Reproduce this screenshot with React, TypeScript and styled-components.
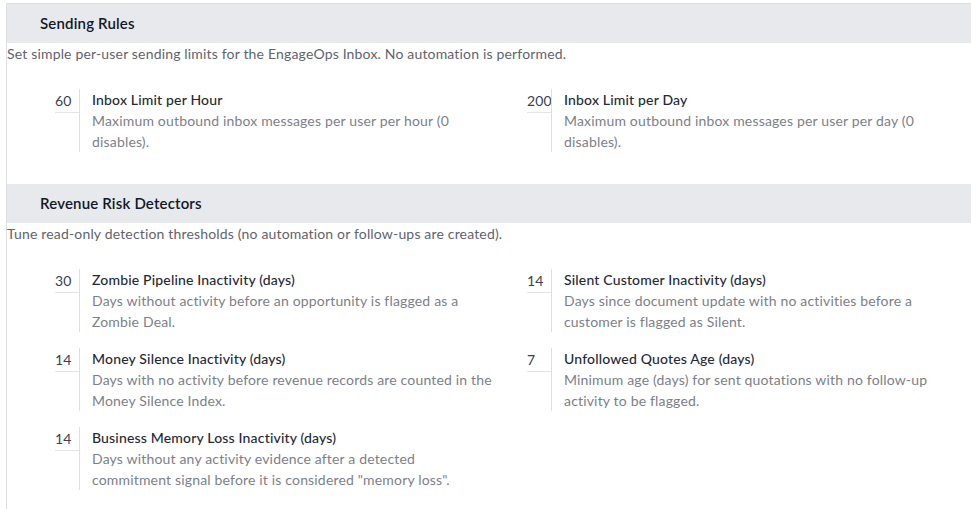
import React from "react";
import styled, { createGlobalStyle } from "styled-components";

const GlobalStyle = createGlobalStyle`
  html, body {
    margin: 0;
    padding: 0;
    background: #ffffff;
  }
  body {
    font-family: Lato, "Noto Sans", "Liberation Sans", sans-serif;
    font-size: 14px;
    line-height: 21px;
    letter-spacing: 0.17px;
    color: #374151;
  }
`;

const Page = styled.div`
  padding: 3px 0 0 6px;
`;

const Sheet = styled.div`
  border-top: 1px solid #dcdee2;
  border-left: 1px solid #dcdee2;
  min-height: 505px;
`;

const Block = styled.section`
  padding-bottom: 32px;
`;

const BlockTitle = styled.h2`
  margin: 0;
  height: 39px;
  display: flex;
  align-items: center;
  padding-left: 33px;
  background: #e7e9ed;
  font-size: 15px;
  font-weight: 600;
  color: #111827;
`;

const BlockTip = styled.div`
  color: #5f636f;
`;

const Grid = styled.div`
  display: grid;
  grid-template-columns: 472px 1fr;
  row-gap: 16px;
  margin-top: 25px;
  padding-left: 48px;
`;

const Box = styled.div`
  display: flex;
  align-items: flex-start;
`;

const ValuePane = styled.div`
  flex: 0 0 24px;
  width: 24px;
  height: 22px;
  padding-top: 1px;
  border-bottom: 1px solid #e2e4e8;
  color: #374151;
  white-space: nowrap;
`;

const TextPane = styled.div`
  border-left: 1px solid #dcdee2;
  padding-left: 12px;
  max-width: 402px;
`;

const Label = styled.div`
  font-weight: 500;
  color: #1f2937;
`;

const Help = styled.div`
  color: #7c7f89;
`;

type Setting = { value: string; label: string; help: string };

const sections: { title: string; tip: string; settings: Setting[] }[] = [
  {
    title: "Sending Rules",
    tip: "Set simple per-user sending limits for the EngageOps Inbox. No automation is performed.",
    settings: [
      {
        value: "60",
        label: "Inbox Limit per Hour",
        help: "Maximum outbound inbox messages per user per hour (0 disables).",
      },
      {
        value: "200",
        label: "Inbox Limit per Day",
        help: "Maximum outbound inbox messages per user per day (0 disables).",
      },
    ],
  },
  {
    title: "Revenue Risk Detectors",
    tip: "Tune read-only detection thresholds (no automation or follow-ups are created).",
    settings: [
      {
        value: "30",
        label: "Zombie Pipeline Inactivity (days)",
        help: "Days without activity before an opportunity is flagged as a Zombie Deal.",
      },
      {
        value: "14",
        label: "Silent Customer Inactivity (days)",
        help: "Days since document update with no activities before a customer is flagged as Silent.",
      },
      {
        value: "14",
        label: "Money Silence Inactivity (days)",
        help: "Days with no activity before revenue records are counted in the Money Silence Index.",
      },
      {
        value: "7",
        label: "Unfollowed Quotes Age (days)",
        help: "Minimum age (days) for sent quotations with no follow-up activity to be flagged.",
      },
      {
        value: "14",
        label: "Business Memory Loss Inactivity (days)",
        help: 'Days without any activity evidence after a detected commitment signal before it is considered "memory loss".',
      },
    ],
  },
];

export default function App() {
  return (
    <>
      <GlobalStyle />
      <Page>
        <Sheet>
          {sections.map((s) => (
            <Block key={s.title}>
              <BlockTitle>{s.title}</BlockTitle>
              <BlockTip>{s.tip}</BlockTip>
              <Grid>
                {s.settings.map((st) => (
                  <Box key={st.label}>
                    <ValuePane>{st.value}</ValuePane>
                    <TextPane>
                      <Label>{st.label}</Label>
                      <Help>{st.help}</Help>
                    </TextPane>
                  </Box>
                ))}
              </Grid>
            </Block>
          ))}
        </Sheet>
      </Page>
    </>
  );
}
